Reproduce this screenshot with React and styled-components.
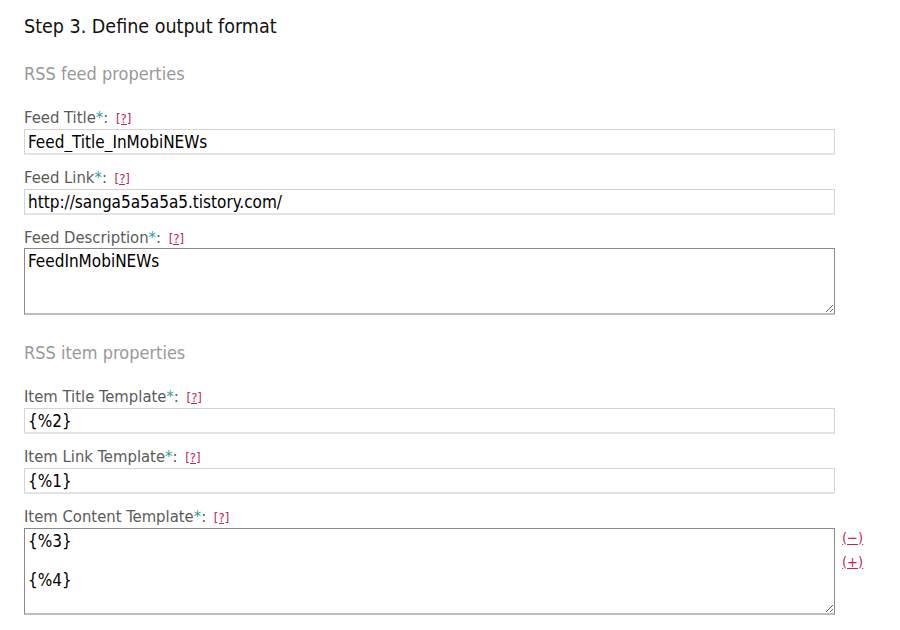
import React from "react";
import styled, { createGlobalStyle } from "styled-components";

const Global = createGlobalStyle`
  html, body { margin: 0; padding: 0; background: #fff; }
  body { font-family: "DejaVu Sans Condensed", "DejaVu Sans", Tahoma, sans-serif; }
`;

const Page = styled.div`
  padding: 14px 0 0 24px;
  width: 876px;
  box-sizing: border-box;
`;

const Title = styled.h2`
  margin: 0;
  font-size: 19.5px;
  line-height: 26px;
  font-weight: normal;
  color: #111;
`;

const Section = styled.h3`
  margin: ${(p) => p.$top}px 0 22px;
  font-size: 18px;
  line-height: 24px;
  font-weight: normal;
  color: #999;
`;

const Field = styled.div`
  margin-bottom: 13px;
`;

const Label = styled.label`
  display: block;
  height: 20px;
  font-size: 16.5px;
  line-height: 20px;
  color: #5a5a5a;
  margin-bottom: ${(p) => (p.$tight ? 0 : 1)}px;
  white-space: nowrap;
`;

const Star = styled.span`
  color: #2a9d9d;
`;

const Help = styled.a`
  margin-left: 3px;
  font-size: 13px;
  line-height: 1;
  color: #c0245c;
  text-decoration: underline;
  cursor: pointer;
`;

const Input = styled.input`
  display: block;
  box-sizing: border-box;
  width: 811px;
  height: 26px;
  padding: 0 3px;
  border: 1px solid #d4d4d4;
  border-bottom: 2px solid #e4e4e4;
  font-family: inherit;
  font-size: 17px;
  color: #000;
  outline: none;
`;

const AreaRow = styled.div`
  display: flex;
  align-items: flex-start;
  gap: 7px;
`;

const Area = styled.textarea`
  display: block;
  box-sizing: border-box;
  width: 811px;
  height: ${(p) => p.$h}px;
  padding: 3px 3px;
  border: 1px solid #8a8a8a;
  border-bottom: 2px solid #bdbdbd;
  font-family: inherit;
  font-size: 17px;
  line-height: 19.5px;
  color: #000;
  outline: none;
  resize: vertical;
`;

const Controls = styled.div`
  display: flex;
  flex-direction: column;
  gap: 6px;
  padding-top: 1px;
`;

const Ctl = styled.a`
  font-size: 14.5px;
  line-height: 18px;
  color: #c0245c;
  text-decoration: underline;
  cursor: pointer;
`;

function TextField({ label, value }) {
  return (
    <Field>
      <Label>
        {label}
        <Star>*</Star>: <Help>[?]</Help>
      </Label>
      <Input defaultValue={value} />
    </Field>
  );
}

export default function App() {
  return (
    <>
      <Global />
      <Page>
        <Title>Step 3. Define output format</Title>
        <Section $top={22}>RSS feed properties</Section>
        <TextField label="Feed Title" value="Feed_Title_InMobiNEWs" />
        <TextField label="Feed Link" value="http://sanga5a5a5a5.tistory.com/" />
        <Field>
          <Label $tight>
            Feed Description<Star>*</Star>: <Help>[?]</Help>
          </Label>
          <Area $h={67} defaultValue="FeedInMobiNEWs" />
        </Field>
        <Section $top={26}>RSS item properties</Section>
        <TextField label="Item Title Template" value="{%2}" />
        <TextField label="Item Link Template" value="{%1}" />
        <Field>
          <Label>
            Item Content Template<Star>*</Star>: <Help>[?]</Help>
          </Label>
          <AreaRow>
            <Area $h={87} defaultValue={"{%3}\n\n{%4}"} />
            <Controls>
              <Ctl>(−)</Ctl>
              <Ctl>(+)</Ctl>
            </Controls>
          </AreaRow>
        </Field>
      </Page>
    </>
  );
}
